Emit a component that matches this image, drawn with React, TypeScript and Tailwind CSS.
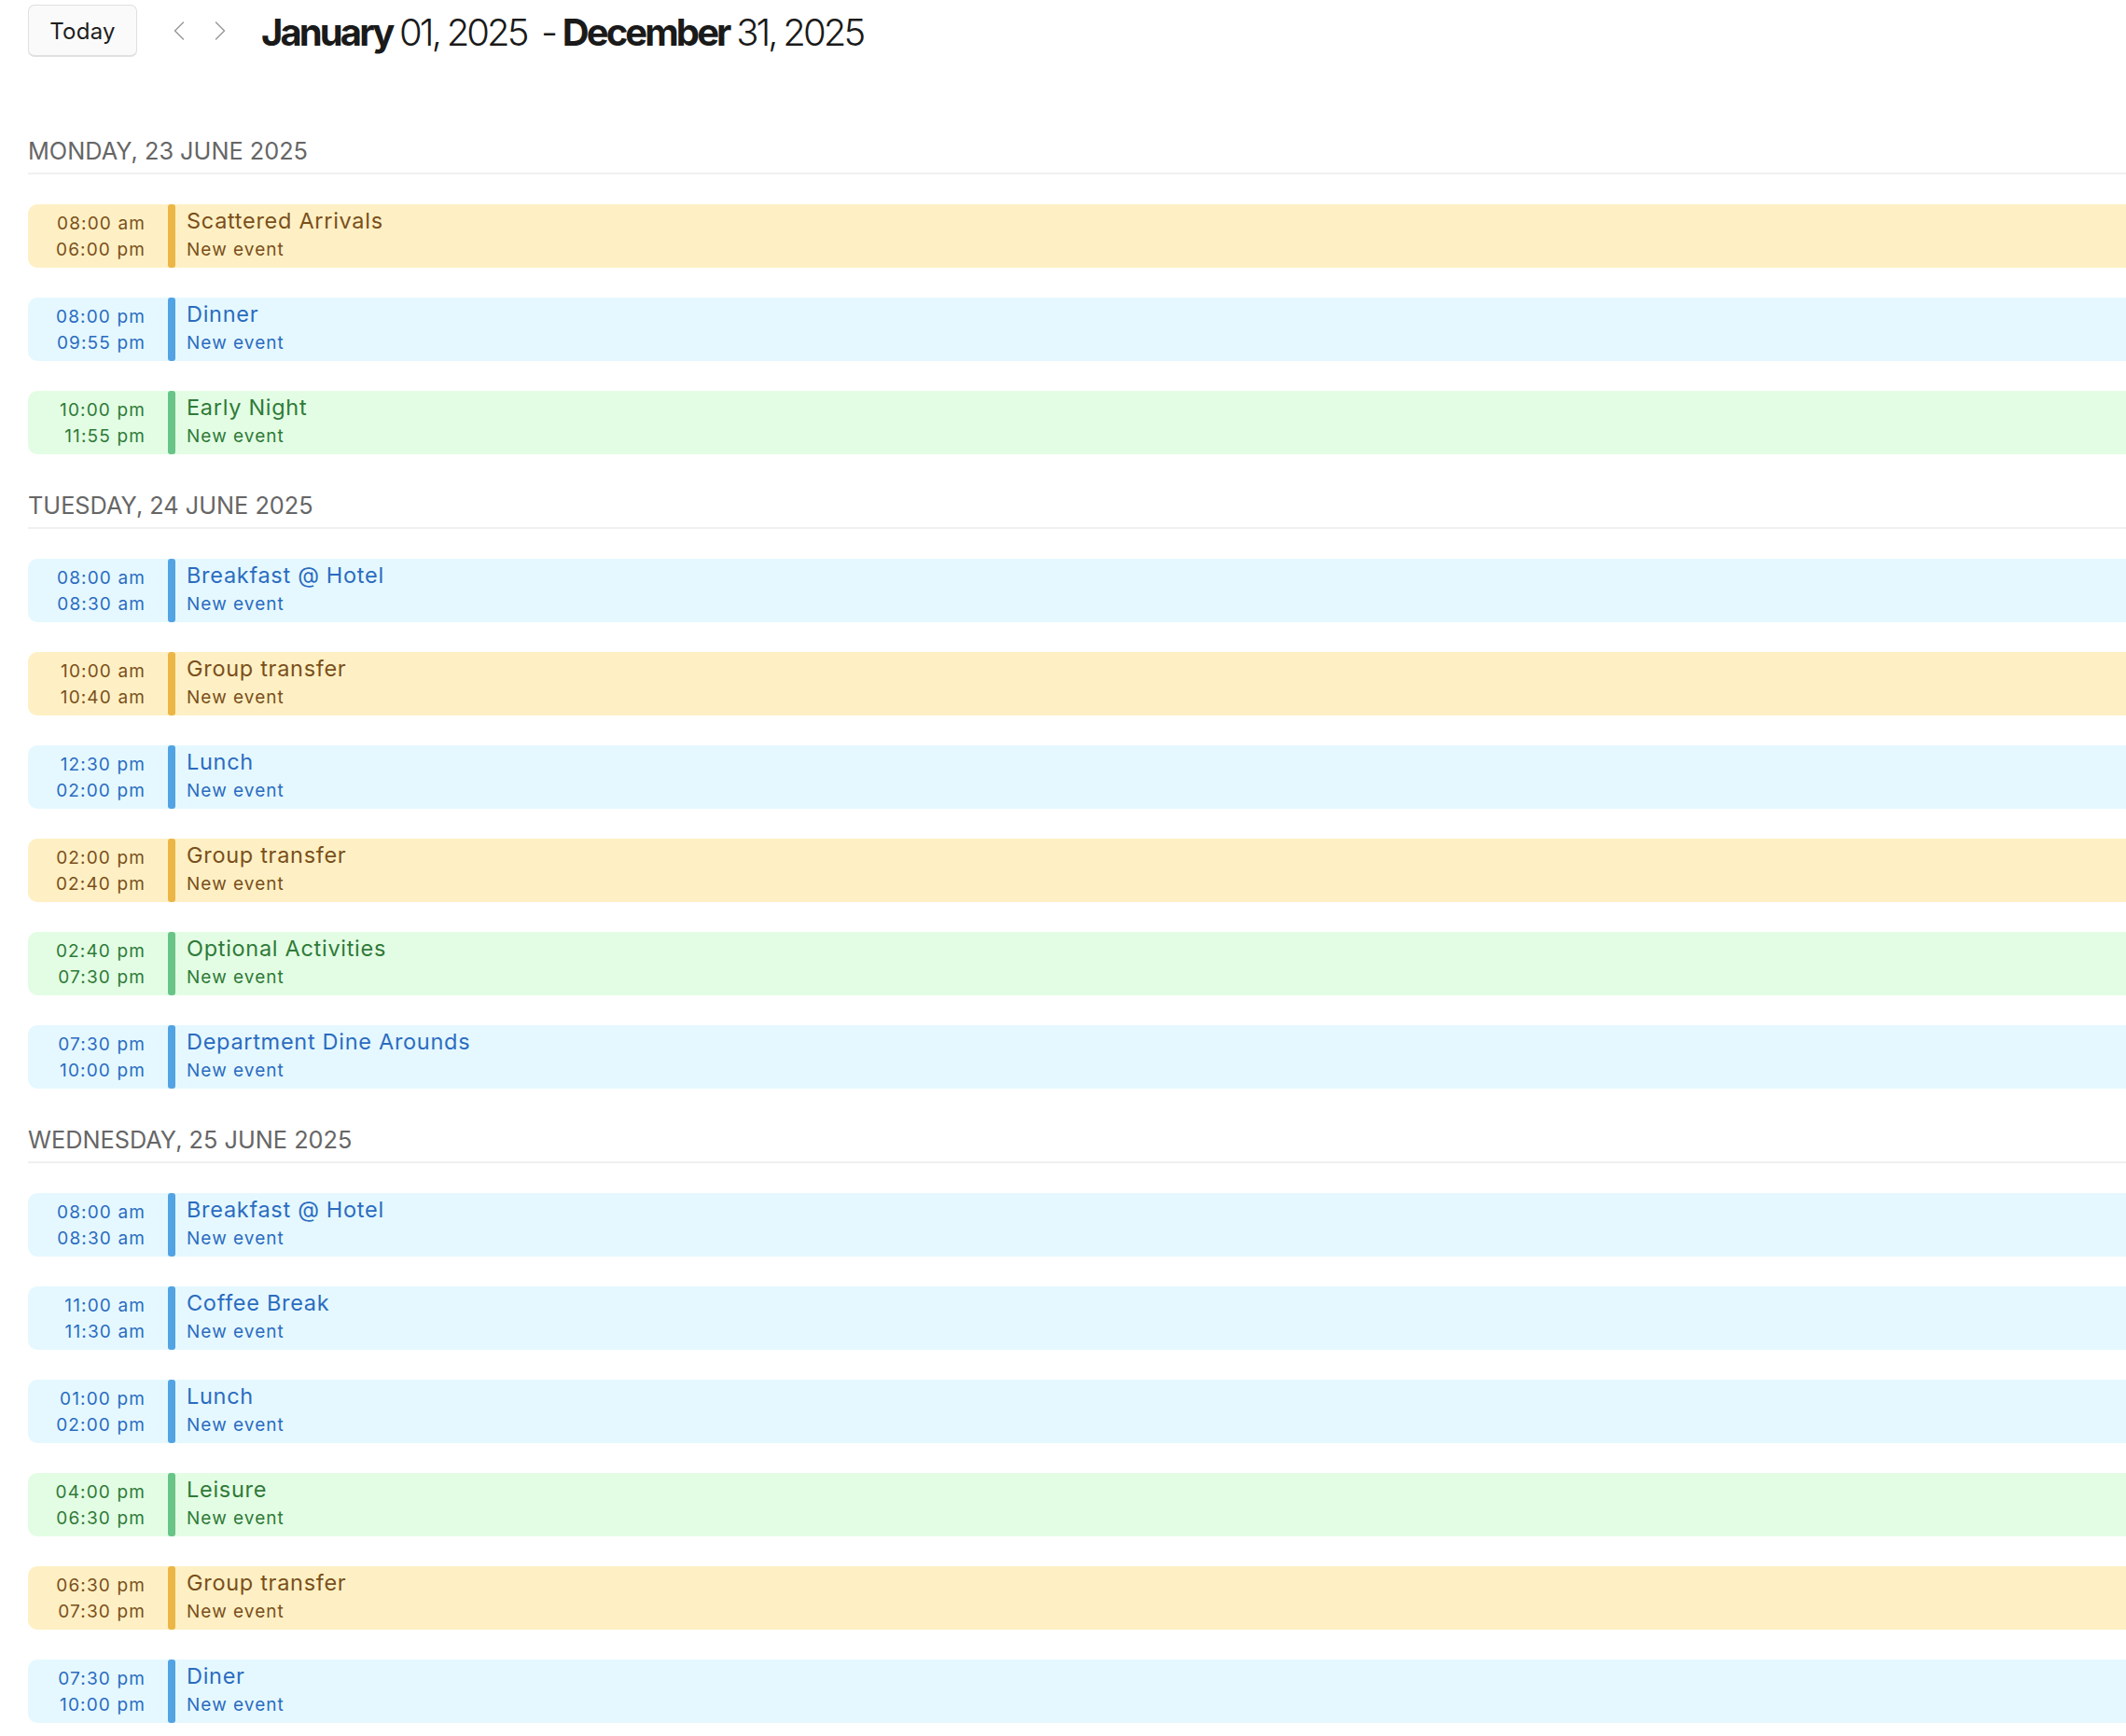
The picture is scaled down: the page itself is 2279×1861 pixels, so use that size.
import React from 'react';
import { ChevronLeft, ChevronRight } from 'lucide-react';

type Tone = 'yellow' | 'blue' | 'green';

interface CalEvent {
  start: string;
  end: string;
  title: string;
  tone: Tone;
}

const toneClasses: Record<Tone, { bg: string; bar: string; text: string }> = {
  yellow: { bg: 'bg-[#fef0c4]', bar: 'bg-[#ebb645]', text: 'text-[#7a4f1a]' },
  blue: { bg: 'bg-[#e5f8ff]', bar: 'bg-[#52a3e3]', text: 'text-[#2b6cbf]' },
  green: { bg: 'bg-[#e3fde4]', bar: 'bg-[#69c488]', text: 'text-[#2f7a38]' },
};

const days: { label: string; events: CalEvent[] }[] = [
  {
    label: 'MONDAY, 23 JUNE 2025',
    events: [
      { start: '08:00 am', end: '06:00 pm', title: 'Scattered Arrivals', tone: 'yellow' },
      { start: '08:00 pm', end: '09:55 pm', title: 'Dinner', tone: 'blue' },
      { start: '10:00 pm', end: '11:55 pm', title: 'Early Night', tone: 'green' },
    ],
  },
  {
    label: 'TUESDAY, 24 JUNE 2025',
    events: [
      { start: '08:00 am', end: '08:30 am', title: 'Breakfast @ Hotel', tone: 'blue' },
      { start: '10:00 am', end: '10:40 am', title: 'Group transfer', tone: 'yellow' },
      { start: '12:30 pm', end: '02:00 pm', title: 'Lunch', tone: 'blue' },
      { start: '02:00 pm', end: '02:40 pm', title: 'Group transfer', tone: 'yellow' },
      { start: '02:40 pm', end: '07:30 pm', title: 'Optional Activities', tone: 'green' },
      { start: '07:30 pm', end: '10:00 pm', title: 'Department Dine Arounds', tone: 'blue' },
    ],
  },
  {
    label: 'WEDNESDAY, 25 JUNE 2025',
    events: [
      { start: '08:00 am', end: '08:30 am', title: 'Breakfast @ Hotel', tone: 'blue' },
      { start: '11:00 am', end: '11:30 am', title: 'Coffee Break', tone: 'blue' },
      { start: '01:00 pm', end: '02:00 pm', title: 'Lunch', tone: 'blue' },
      { start: '04:00 pm', end: '06:30 pm', title: 'Leisure', tone: 'green' },
      { start: '06:30 pm', end: '07:30 pm', title: 'Group transfer', tone: 'yellow' },
      { start: '07:30 pm', end: '10:00 pm', title: 'Diner', tone: 'blue' },
    ],
  },
];

const EventRow: React.FC<{ event: CalEvent }> = ({ event }) => {
  const tone = toneClasses[event.tone];
  return (
    <div className={`flex h-[68px] rounded-l-[10px] ${tone.bg} ${tone.text}`}>
      <div className="w-[150px] shrink-0 pr-[24px] pt-[7px] text-right text-[19px] leading-[28px] tracking-[0.06em]">
        <p>{event.start}</p>
        <p>{event.end}</p>
      </div>
      <div className={`w-2 shrink-0 rounded-[3px] ${tone.bar}`}></div>
      <div className="pl-[12px] pt-[2px]">
        <p className="text-[23.5px] leading-[32px] tracking-[0.03em]">{event.title}</p>
        <p className="pt-[1px] text-[19px] leading-[28px] tracking-[0.055em]">New event</p>
      </div>
    </div>
  );
};

export default function App() {
  return (
    <div className="h-[1861px] overflow-hidden bg-white pl-[30px] font-['Inter',sans-serif]">
      <header className="flex h-[66px] items-start pt-[5px]">
        <button className="h-[56px] w-[117px] rounded-[7px] border border-b-2 border-[#e0e0e0] bg-[#fafafa] pt-[2px] text-[24px] tracking-[0.01em] text-[#1d1d1d]">
          Today
        </button>
        <div className="ml-[27px] mt-[10px] flex gap-[8px] text-[#9a9a9a]">
          <ChevronLeft size={36} strokeWidth={1} />
          <ChevronRight size={36} strokeWidth={1} />
        </div>
        <h1 className="ml-[26px] mt-[6px] whitespace-pre text-[40px] leading-[48px] tracking-[-2.9px] [word-spacing:-0.7px] text-[#1a1a1a]">
          <span className="font-bold">January</span>
          <span className="font-light"> 01, 2025  - </span>
          <span className="font-bold">December</span>
          <span className="font-light"> 31, 2025</span>
        </h1>
      </header>

      {days.map((day, i) => (
        <section key={day.label} className={i === 0 ? 'pt-[80px]' : 'pt-[39px]'}>
          <h2 className="h-[41px] border-b-2 border-[#f0f0f0] text-[25.3px] leading-[32px] text-[#666666]">
            {day.label}
          </h2>
          <div className="mt-8 flex flex-col gap-8">
            {day.events.map((event, j) => (
              <EventRow key={j} event={event} />
            ))}
          </div>
        </section>
      ))}
    </div>
  );
}
